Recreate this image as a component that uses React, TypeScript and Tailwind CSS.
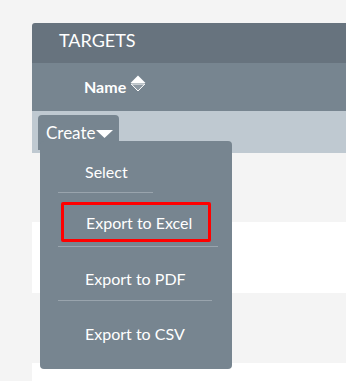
const font = { fontFamily: "Lato, 'Open Sans', sans-serif" };

function SortIcon() {
  return (
    <svg width="16" height="17" viewBox="0 0 16 17" className="ml-[4px] -mt-[8px]">
      <path d="M8 0.5 L15.5 8 L0.5 8 Z" fill="#ffffff" />
      <path d="M1.2 9 L14.8 9 L8 16 Z" fill="#8d99a3" stroke="#ffffff" strokeWidth="1" strokeLinejoin="round" />
    </svg>
  );
}

function MenuItem({ label, boxed }: { label: string; boxed?: boolean }) {
  return (
    <li className="px-[18px]">
      <div
        className={
          boxed
            ? "mx-[3px] flex h-[40px] items-center rounded-[2px] border-[3px] border-[#ff0000] pl-[22px] pt-[2px]"
            : "flex h-[40px] items-center pl-[27px] pt-[2px]"
        }
      >
        <span className="text-[16px] text-white">{label}</span>
      </div>
    </li>
  );
}

export default function App() {
  return (
    <div className="h-[381px] w-[346px] overflow-hidden bg-[#f4f4f4] pl-[32px] pt-[23px]" style={font}>
      <div className="relative w-[400px]">
        <div className="flex h-[40px] items-center rounded-tl-[3px] bg-[#67737e] pb-[6px] pl-[27px]">
          <h1 className="text-[18px] text-white">TARGETS</h1>
        </div>
        <div className="flex h-[48px] items-center bg-[#778590] pl-[52px]">
          <span className="text-[16px] font-bold text-white">Name</span>
          <SortIcon />
        </div>
        <div className="h-[42px] bg-[#bfc9d1] pl-[6px] pt-[4px]">
          <button className="flex h-[35px] w-[81px] items-center rounded-t-[4px] bg-[#778590] pl-[8px] text-[17px] text-white">
            Create
            <svg width="17" height="8" viewBox="0 0 17 8" className="mt-[2px]">
              <path d="M0 0 L17 0 L8.5 8 Z" fill="#ffffff" />
            </svg>
          </button>
        </div>
        <div className="h-[69px] bg-[#f4f4f4]" />
        <div className="h-[71px] bg-white" />
        <div className="h-[70px] bg-[#f4f4f4]" />
        <div className="h-[70px] bg-white" />

        <ul className="absolute left-[8px] top-[118px] w-[192px] rounded-[4px] bg-[#778590] pb-[16px] pt-[10px]">
          <MenuItem label="Select" />
          <li className="ml-[18px] mt-[1px] h-px w-[95px] bg-[#99a4ad]" />
          <li className="h-[9px]" />
          <MenuItem label="Export to Excel" boxed />
          <li className="ml-[18px] mt-[4px] h-px w-[160px] bg-[#99a4ad]" />
          <li className="h-[11px]" />
          <MenuItem label="Export to PDF" />
          <li className="ml-[18px] mt-[2px] h-px w-[154px] bg-[#99a4ad]" />
          <li className="h-[12px]" />
          <MenuItem label="Export to CSV" />
        </ul>
      </div>
    </div>
  );
}
